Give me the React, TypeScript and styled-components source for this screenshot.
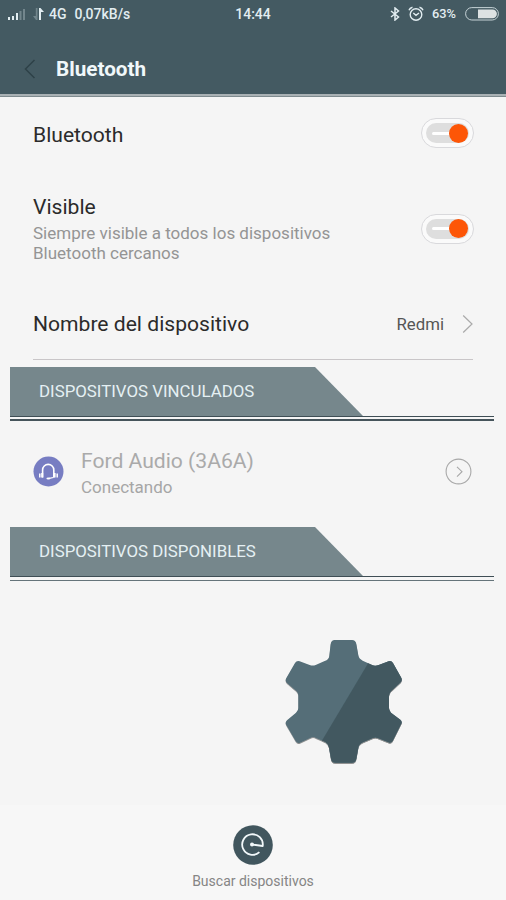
import React from 'react';
import styled, { createGlobalStyle } from 'styled-components';

const slate = '#445a62';

const GlobalStyle = createGlobalStyle`
  * { box-sizing: border-box; }
  body { margin: 0; background: #f5f5f5; }
  svg { display: block; flex: none; }
`;

const Screen = styled.main`
  display: flex;
  flex-direction: column;
  width: 506px;
  height: 900px;
  overflow: hidden;
  background: #f5f5f5;
  color: #2b2b2b;
  font-family: Roboto, "Liberation Sans", sans-serif;
  white-space: nowrap;
`;

const StatusBar = styled.div`
  display: grid;
  grid-template-columns: 1fr auto 1fr;
  align-items: center;
  height: 28px;
  padding: 0 7px 0 8px;
  background: ${slate};
  color: #e2edf1;
  font-weight: 500;
  line-height: 28px;
`;

const StatusGroup = styled.div<{ $end?: boolean }>`
  display: flex;
  align-items: center;
  justify-content: ${p => (p.$end ? 'flex-end' : 'flex-start')};
`;

const StatusText = styled.span<{ $left?: number; $right?: number; $size?: number }>`
  margin-left: ${p => p.$left ?? 0}px;
  margin-right: ${p => p.$right ?? 0}px;
  font-size: ${p => p.$size ?? 14}px;
`;

const Clock = styled(StatusText)`
  margin-right: 1px;
`;

const Header = styled.header`
  display: flex;
  align-items: center;
  gap: 20px;
  height: 69px;
  padding: 12px 24px 0;
  background: linear-gradient(${slate} 66px, #a9b1b4 66px 68px, #7f8b8f 68px);
`;

const HeaderTitle = styled.h1`
  margin: 0;
  color: #f1f8fa;
  font-size: 20.7px;
  font-weight: 700;
  line-height: 26px;
`;

const Settings = styled.section`
  display: flex;
  flex-direction: column;
  margin: 0 33px 7px;
  border-bottom: 1px solid #c9c6c8;
`;

const SettingRow = styled.div<{ $height: number }>`
  display: flex;
  align-items: center;
  justify-content: space-between;
  height: ${p => p.$height}px;
`;

const Label = styled.div<{ $muted?: boolean; $drop?: number }>`
  padding-top: ${p => p.$drop ?? 0}px;
  color: ${p => (p.$muted ? '#aaaaaa' : '#2b2b2b')};
  font-size: 21.1px;
  line-height: 26px;
`;

const Detail = styled.div<{ $muted?: boolean }>`
  color: ${p => (p.$muted ? '#a6a6a6' : '#949494')};
  font-size: 17px;
  line-height: 20px;
`;

const VisibleText = styled.div`
  display: flex;
  flex-direction: column;
  gap: 3px;
`;

const ValueGroup = styled.div`
  display: flex;
  align-items: center;
  gap: 18px;
  color: #555;
  font-size: 16.8px;
`;

const Toggle = styled.div`
  display: flex;
  align-items: center;
  width: 53px;
  height: 30px;
  padding: 4px;
  margin-right: -1px;
  border: 1px solid #d9d9dc;
  border-radius: 15px;
  background: #fafafa;
`;

const Track = styled.div`
  display: flex;
  align-items: center;
  justify-content: space-between;
  width: 43px;
  height: 20px;
  padding-left: 6px;
  border-radius: 10px;
  background: #dedede;
`;

const TrackMark = styled.span`
  width: 17px;
  height: 3px;
  border-radius: 2px 0 0 2px;
  background: #fff;
`;

const Knob = styled.span`
  width: 19px;
  height: 19px;
  margin-right: 1px;
  border-radius: 50%;
  background: #fd5607;
`;

const SectionHeader = styled.div<{ $thin?: boolean }>`
  margin: 0 12px 0 10px;
  height: 54px;
  border-bottom: ${p => (p.$thin ? '1px solid #65747a' : '2px solid #46545b')};
`;

const SectionRule = styled.div`
  height: 50px;
  border-bottom: 1px solid #3f4e55;
`;

const SectionTab = styled.h2`
  width: 353px;
  height: 49px;
  margin: 0;
  padding-left: 29px;
  background: #76878c;
  clip-path: polygon(0 0, 305px 0, 100% 100%, 0 100%);
  color: #e5f0f3;
  font-size: 16.85px;
  font-weight: 400;
  line-height: 49px;
`;

const DeviceRow = styled.div`
  display: flex;
  align-items: center;
  height: 106px;
  padding: 0 34px 6px 33px;
`;

const DeviceText = styled.div`
  flex: 1;
  padding: 3px 0 0 17px;
`;

const DeviceName = styled(Label)`
  margin-bottom: 3px;
`;

const EmptyArea = styled.div`
  flex: 1;
  padding: 44px 0 0 270px;
`;

const Footer = styled.footer`
  display: flex;
  flex-direction: column;
  align-items: center;
  height: 95px;
  padding-top: 20px;
  background: #f7f7f7;
  color: #858585;
  font-size: 14px;
  line-height: 18px;
`;

const FooterLabel = styled.span`
  margin-top: 7px;
`;

const SignalIcon = () => (
  <svg width="18" height="14" viewBox="0 0 18 14" fill="#e2edf1">
    <path d="M0 10h2v3H0zM4 9h2v4H4zM8 6h2v7H8z" />
    <path d="M11.5 4h2v9h-2zM15 2h2v11h-2z" opacity=".3" />
  </svg>
);

const DataIcon = () => (
  <svg width="12" height="14" viewBox="0 0 12 14">
    <path d="M4.5 1v12H3L0 9h2.8V1z" fill="#71858c" />
    <path d="M6 13V1h1.5L11 5H8v8z" fill="#e2edf1" />
  </svg>
);

const BluetoothIcon = () => (
  <svg width="10" height="14" viewBox="0 0 10 14" fill="none" stroke="#e2edf1" strokeWidth="1.5">
    <path d="m1 4 7.5 6L5 13V1l3.5 3L1 10" />
  </svg>
);

const AlarmIcon = () => (
  <svg width="16" height="16" viewBox="0 0 16 16" fill="none" stroke="#e2edf1" strokeWidth="1.4">
    <circle cx="8" cy="8.5" r="5.8" />
    <path d="m5.3 7 2.7 2.3L11 7M1 4.2Q1.8 1.8 4.5 1.2M15 4.2Q14.2 1.8 11.5 1.2" />
  </svg>
);

const BatteryIcon = () => (
  <svg width="34" height="14" viewBox="0 0 34 14">
    <rect x=".6" y=".6" width="32.8" height="12.4" rx="6.2" fill="none" stroke="#c5d2d6" />
    <path d="M13 2.4h14.5a4.4 4.4 0 0 1 0 8.8H13z" fill="#dde2e3" />
  </svg>
);

const BackIcon = () => (
  <svg width="12" height="20" viewBox="0 0 12 20" fill="none" stroke="#2e4148" strokeWidth="1.5">
    <path d="M10.5 1 1.5 10l9 9" />
  </svg>
);

const ChevronIcon = () => (
  <svg width="11" height="20" viewBox="0 0 11 20" fill="none" stroke="#aaa" strokeWidth="1.2">
    <path d="m1.2 1.5 8.8 8.5-8.8 8.5" />
  </svg>
);

const HeadsetIcon = () => (
  <svg width="31" height="31" viewBox="0 0 31 31">
    <circle cx="15.5" cy="15.5" r="15" fill="#777dc2" />
    <g fill="none" stroke="#fff">
      <path d="M9.6 21.5V14a5.6 5.6 0 0 1 11.2 0v7.5" strokeWidth="1.6" />
      <path d="M9.2 17v4.5M21.6 17v4.5" strokeWidth="2" />
      <path d="M6.8 17.5v4M24.2 17.5v4" strokeWidth="1.5" />
      <path d="M20.5 21.5 16 22.4" strokeWidth="1.1" />
    </g>
    <ellipse cx="15.4" cy="22.5" rx="2" ry="1.1" fill="#fff" />
  </svg>
);

const DetailsIcon = () => (
  <svg width="27" height="27" viewBox="0 0 27 27" fill="none" stroke="#a8a8a8" strokeWidth="1.1">
    <circle cx="13.5" cy="13.5" r="12.4" />
    <path d="m12 8.8 5 4.9-5 4.9" />
  </svg>
);

const GearIcon = () => {
  const outline =
    'M194 45H246Q257 45 259 57L265 91Q267 102 278 107L308 121Q316 124 326 120L356 109Q364 106 369 114L393 157Q398 165 392 172L363 199Q357 205 357 212V249Q357 257 363 263L391 284Q398 290 393 298L368 348Q363 355 355 352L323 339Q316 336 309 339L279 352Q267 357 265 368L259 401Q257 413 246 413H196Q185 413 183 401L177 367Q175 356 166 351L138 339Q130 334 122 338L90 353Q82 356 77 348L49 300Q44 293 51 286L78 263Q85 257 85 249V211Q85 204 79 198L51 174Q44 167 49 159L75 114Q80 106 89 109L119 120Q128 123 137 120L164 108Q177 103 178 92L182 57Q184 45 194 45Z';
  return (
    <svg width="150" height="150" viewBox="0 0 450 450">
      <defs>
        <clipPath id="gear-shade">
          <path d="M322 68 118 410v40h332V68z" />
        </clipPath>
        <filter id="gear-shadow" x="-10%" y="-10%" width="120%" height="120%">
          <feDropShadow dx="0" dy="3" stdDeviation="2" floodColor="#222" floodOpacity=".5" />
        </filter>
      </defs>
      <g filter="url(#gear-shadow)">
        <path d={outline} fill="#546e78" />
        <path d={outline} fill="#435961" clipPath="url(#gear-shade)" />
      </g>
    </svg>
  );
};

const ScanIcon = () => (
  <svg width="40" height="40" viewBox="0 0 40 40">
    <circle cx="20" cy="20" r="19.8" fill="#41565e" />
    <path d="M19 19.5 29.7 21A10.3 10.3 0 1 0 26.4 27.2" fill="none" stroke="#f2f8fa" strokeWidth="1.8" strokeLinejoin="round" />
    <circle cx="19" cy="19.5" r="2" fill="#f2f8fa" />
  </svg>
);

const Switch = () => (
  <Toggle role="switch" aria-checked="true">
    <Track>
      <TrackMark />
      <Knob />
    </Track>
  </Toggle>
);

const Section = ({ title, thin }: { title: string; thin?: boolean }) => (
  <SectionHeader $thin={thin}>
    <SectionRule>
      <SectionTab>{title}</SectionTab>
    </SectionRule>
  </SectionHeader>
);

export default function App() {
  return (
    <Screen>
      <GlobalStyle />
      <StatusBar>
        <StatusGroup>
          <SignalIcon />
          <StatusText $left={7} />
          <DataIcon />
          <StatusText $left={4}>4G</StatusText>
          <StatusText $left={8}>0,07kB/s</StatusText>
        </StatusGroup>
        <Clock>14:44</Clock>
        <StatusGroup $end>
          <BluetoothIcon />
          <StatusText $left={8} />
          <AlarmIcon />
          <StatusText $left={8} $right={9} $size={12.8}>63%</StatusText>
          <BatteryIcon />
        </StatusGroup>
      </StatusBar>
      <Header>
        <BackIcon />
        <HeaderTitle>Bluetooth</HeaderTitle>
      </Header>
      <Settings>
        <SettingRow $height={72}>
          <Label $drop={3}>Bluetooth</Label>
          <Switch />
        </SettingRow>
        <SettingRow $height={119}>
          <VisibleText>
            <Label>Visible</Label>
            <Detail>
              Siempre visible a todos los dispositivos
              <br />
              Bluetooth cercanos
            </Detail>
          </VisibleText>
          <Switch />
        </SettingRow>
        <SettingRow $height={71}>
          <Label $drop={1}>Nombre del dispositivo</Label>
          <ValueGroup>
            Redmi
            <ChevronIcon />
          </ValueGroup>
        </SettingRow>
      </Settings>
      <Section title="DISPOSITIVOS VINCULADOS" />
      <DeviceRow>
        <HeadsetIcon />
        <DeviceText>
          <DeviceName $muted>Ford Audio (3A6A)</DeviceName>
          <Detail $muted>Conectando</Detail>
        </DeviceText>
        <DetailsIcon />
      </DeviceRow>
      <Section title="DISPOSITIVOS DISPONIBLES" thin />
      <EmptyArea>
        <GearIcon />
      </EmptyArea>
      <Footer>
        <ScanIcon />
        <FooterLabel>Buscar dispositivos</FooterLabel>
      </Footer>
    </Screen>
  );
}
